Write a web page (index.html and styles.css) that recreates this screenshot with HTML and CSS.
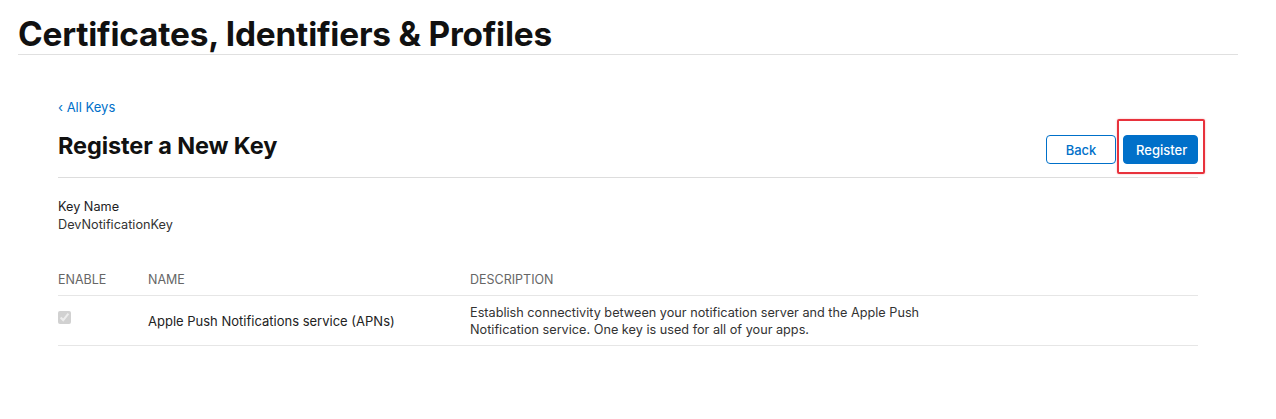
FILE: index.html
```html
<!DOCTYPE html>
<html lang="en">
<head>
    <meta charset="UTF-8">
    <title>Certificates, Identifiers &amp; Profiles</title>
    <link rel="stylesheet" href="styles.css">
</head>
<body>
    <header class="page-header">
        <h1>Certificates, Identifiers &amp; Profiles</h1>
    </header>

    <main class="content">
        <a class="back-link" href="#">&lsaquo; All Keys</a>
        <div class="title-row">
            <h2>Register a New Key</h2>
            <div class="actions">
                <button class="btn btn-outline">Back</button>
                <span class="highlight"><button class="btn btn-primary">Register</button></span>
            </div>
        </div>

        <div class="field">
            <div class="field-label">Key Name</div>
            <div class="field-value">DevNotificationKey</div>
        </div>

        <table class="services">
            <thead>
                <tr>
                    <th class="col-enable">Enable</th>
                    <th class="col-name">Name</th>
                    <th>Description</th>
                </tr>
            </thead>
            <tbody>
                <tr>
                    <td class="col-enable"><input type="checkbox" checked disabled></td>
                    <td class="col-name">Apple Push Notifications service (APNs)</td>
                    <td class="desc">Establish connectivity between your notification server and the Apple Push Notification service. One key is used for all of your apps.</td>
                </tr>
            </tbody>
        </table>
    </main>
</body>
</html>
```

FILE: styles.css
```css
body { margin: 0; font-family: Inter, "Noto Sans", sans-serif; color: #333; background: #fff; }
.page-header { margin: 0 38px 0 18px; border-bottom: 1px solid #e0e0e0; }
.page-header h1 { margin: 0; padding-top: 14px; font-size: 33.4px; line-height: 40px; font-weight: 700; color: #111; letter-spacing: -0.2px; }
.content { margin: 0 78px 0 58px; padding-top: 43px; }
.back-link { display: block; font-size: 13px; line-height: 18px; color: #0070c9; text-decoration: none; }
.title-row { display: flex; justify-content: space-between; align-items: center; border-bottom: 1px solid #ddd; height: 57px; margin-top: 4px; margin-bottom: 20px; }
.title-row h2 { margin: 0 0 6px; font-size: 23.5px; font-weight: 700; color: #111; letter-spacing: -0.1px; }
.actions { display: flex; align-items: center; gap: 7px; margin-top: 2px; }
.btn { font-family: inherit; font-size: 13px; font-weight: 500; height: 29px; padding: 0 12px; border-radius: 4px; cursor: pointer; }
.btn-outline { background: #fff; color: #0070c9; border: 1px solid #0070c9; width: 70px; }
.btn-primary { background: #0070c9; color: #fff; border: 1px solid #0070c9; width: 75px; }
.highlight { position: relative; display: inline-flex; }
.highlight::after { content: ""; position: absolute; left: -6px; right: -7px; top: -16px; bottom: -10px; border: 2px solid #e8323c; border-radius: 2px; box-shadow: 0 0 2px rgba(232, 50, 60, 0.4); }
.field { font-size: 12.7px; line-height: 18px; color: #333; }
.field-label { color: #1d1d1f; }
.services { width: 100%; border-collapse: collapse; margin-top: 38px; font-size: 12.7px; }
.services th { text-align: left; font-weight: 400; font-size: 12.5px; text-transform: uppercase; color: #666; padding: 0 0 8px; border-bottom: 1px solid #e6e6e6; }
.services td { padding: 8px 0 7px; border-bottom: 1px solid #e6e6e6; vertical-align: middle; color: #333; line-height: 17px; }
.col-enable { width: 90px; }
.col-name { width: 322px; }
.services td.col-name { font-size: 13px; color: #222; }
.desc { padding-right: 270px !important; }
.services input { margin: 0; width: 13px; height: 13px; position: relative; top: -2px; }
```
